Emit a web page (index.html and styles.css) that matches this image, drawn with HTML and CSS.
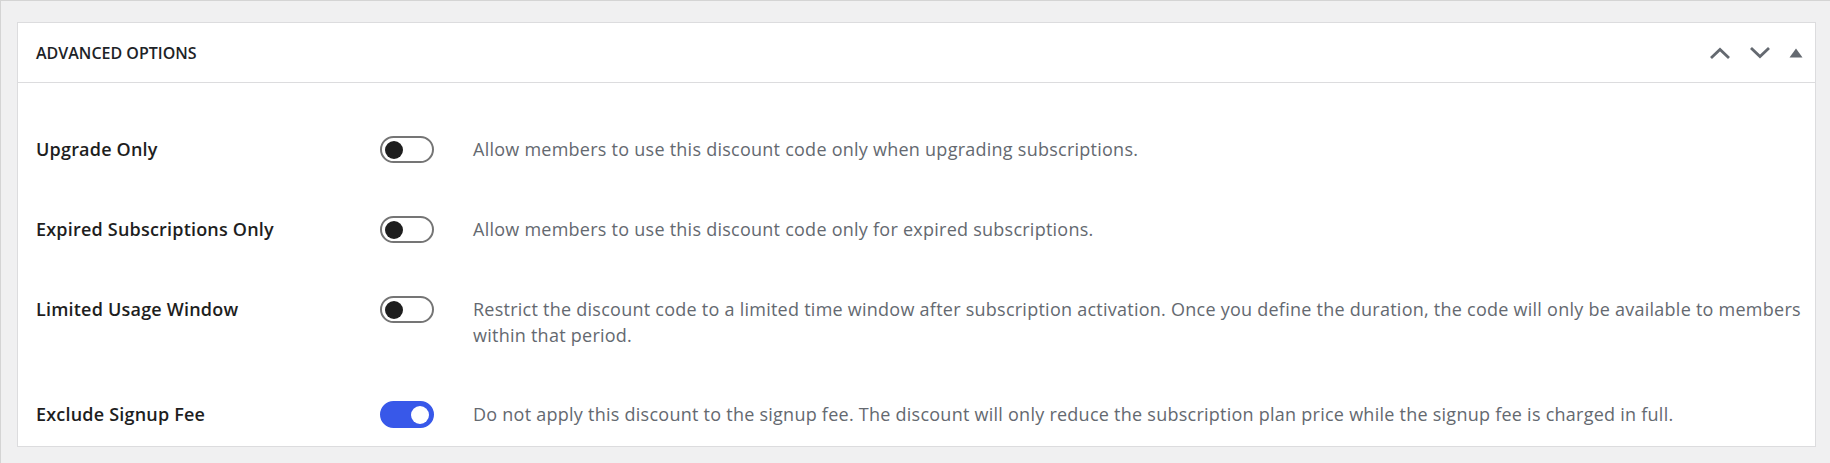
FILE: index.html
```html
<!DOCTYPE html>
<html lang="en">
<head>
<meta charset="utf-8">
<title>Advanced Options</title>
<link rel="stylesheet" href="styles.css">
</head>
<body>
<div class="page">
  <section class="panel">
    <header class="panel-head">
      <h2 class="panel-title">ADVANCED OPTIONS</h2>
      <div class="panel-actions">
        <button class="icon-btn" aria-label="Move up">
          <svg width="22" height="14" viewBox="0 0 22 14"><polyline points="2,12 11,3.5 20,12" fill="none" stroke="#646970" stroke-width="2.8"/></svg>
        </button>
        <button class="icon-btn" aria-label="Move down">
          <svg width="22" height="14" viewBox="0 0 22 14"><polyline points="2,2 11,10.5 20,2" fill="none" stroke="#646970" stroke-width="2.8"/></svg>
        </button>
        <button class="icon-btn tri" aria-label="Toggle panel">
          <svg width="14" height="10" viewBox="0 0 14 10"><polygon points="7,0.5 13.5,9.5 0.5,9.5" fill="#646970"/></svg>
        </button>
      </div>
    </header>
    <div class="panel-body">
      <div class="row">
        <div class="label">Upgrade Only</div>
        <div class="control"><span class="toggle"><span class="knob"></span></span></div>
        <div class="desc">Allow members to use this discount code only when upgrading subscriptions.</div>
      </div>
      <div class="row">
        <div class="label">Expired Subscriptions Only</div>
        <div class="control"><span class="toggle"><span class="knob"></span></span></div>
        <div class="desc">Allow members to use this discount code only for expired subscriptions.</div>
      </div>
      <div class="row">
        <div class="label">Limited Usage Window</div>
        <div class="control"><span class="toggle"><span class="knob"></span></span></div>
        <div class="desc">Restrict the discount code to a limited time window after subscription activation. Once you define the duration, the code will only be available to members within that period.</div>
      </div>
      <div class="row">
        <div class="label">Exclude Signup Fee</div>
        <div class="control"><span class="toggle on"><span class="knob"></span></span></div>
        <div class="desc">Do not apply this discount to the signup fee. The discount will only reduce the subscription plan price while the signup fee is charged in full.</div>
      </div>
    </div>
  </section>
</div>
</body>
</html>
```
FILE: styles.css
```css
html, body {
  margin: 0;
  padding: 0;
}
body {
  background: #f0f0f1;
  font-family: "Open Sans", "Noto Sans", sans-serif;
  color: #1d2327;
  width: 1830px;
  height: 463px;
  overflow: hidden;
}
.page {
  box-sizing: border-box;
  height: 463px;
  padding: 21px 14px 0 16px;
  border-top: 1px solid #d4d4d4;
  border-left: 1px solid #d4d4d4;
}
.panel {
  background: #fff;
  border: 1px solid #dcdcde;
}
.panel-head {
  display: flex;
  align-items: center;
  justify-content: space-between;
  height: 59px;
  padding: 0 12px 0 18px;
  border-bottom: 1px solid #dcdcde;
}
.panel-title {
  margin: 0;
  font-size: 16px;
  font-weight: 600;
  letter-spacing: 0;
}
.panel-actions {
  display: flex;
  align-items: center;
  gap: 18px;
}
.icon-btn {
  border: 0;
  background: none;
  padding: 0;
  display: flex;
  align-items: center;
}
.panel-body {
  display: flex;
  flex-direction: column;
  gap: 53px;
  padding: 53px 8px 18px 18px;
}
.row {
  display: flex;
  align-items: flex-start;
}
.label {
  width: 344px;
  flex: none;
  font-size: 18px;
  font-weight: 600;
  line-height: 27px;
  letter-spacing: 0.2px;
  color: #1e1e1e;
}
.control {
  width: 93px;
  flex: none;
  height: 27px;
  display: flex;
  align-items: center;
}
.desc {
  flex: 1;
  font-size: 18px;
  line-height: 26px;
  color: #646970;
  letter-spacing: 0.25px;
}
.toggle {
  box-sizing: border-box;
  width: 54px;
  height: 27px;
  border: 2px solid #757575;
  border-radius: 14px;
  display: flex;
  align-items: center;
  padding: 0 3px;
}
.knob {
  width: 18px;
  height: 18px;
  border-radius: 50%;
  background: #1e1e1e;
}
.toggle.on {
  background: #3858e9;
  border-color: #3858e9;
  justify-content: flex-end;
}
.toggle.on .knob {
  background: #fff;
}
```
